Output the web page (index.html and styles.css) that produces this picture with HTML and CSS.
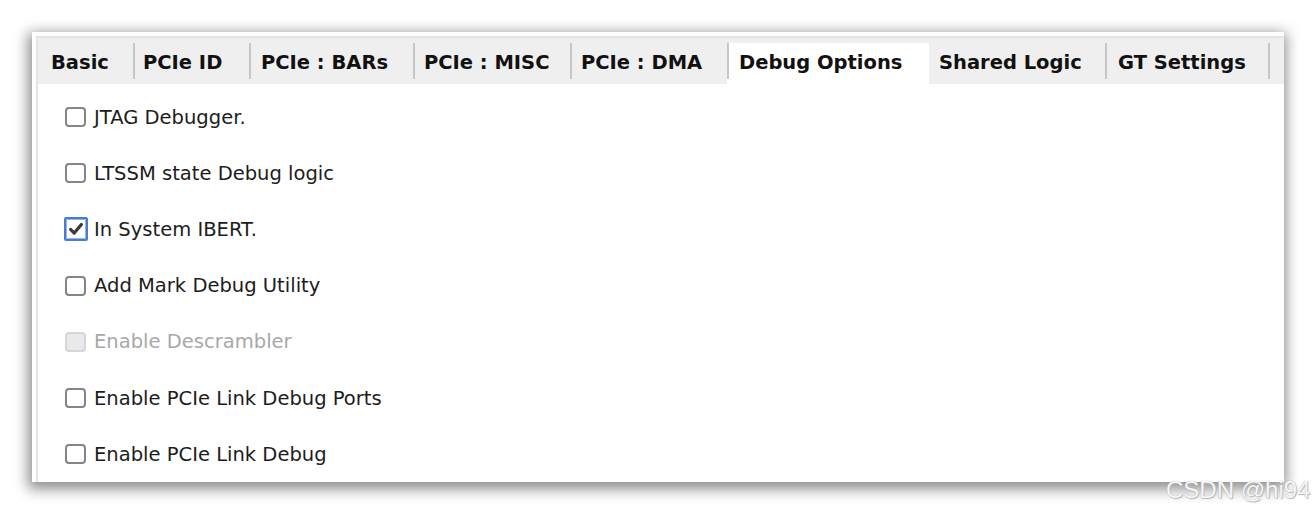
FILE: index.html
```html
<!DOCTYPE html>
<html>
<head>
<meta charset="utf-8">
<link rel="stylesheet" href="styles.css">
</head>
<body>
<div class="panel">
  <div class="frame">
    <div class="tabbar">
      <div class="tab t1">Basic</div>
      <div class="tab t2">PCIe ID</div>
      <div class="tab t3">PCIe : BARs</div>
      <div class="tab t4">PCIe : MISC</div>
      <div class="tab t5">PCIe : DMA</div>
      <div class="tab t6 active">Debug Options</div>
      <div class="tab t7">Shared Logic</div>
      <div class="tab t8">GT Settings</div>
    </div>
    <div class="content">
      <div class="row"><span class="box"></span><span class="label">JTAG Debugger.</span></div>
      <div class="row"><span class="box"></span><span class="label">LTSSM state Debug logic</span></div>
      <div class="row"><span class="box checked"><svg viewBox="0 0 20 20" width="18" height="18"><path d="M4 10.5 L8 14.5 L16 5" fill="none" stroke="#3a3a3a" stroke-width="3.6" stroke-linecap="round" stroke-linejoin="round"/></svg></span><span class="label">In System IBERT.</span></div>
      <div class="row"><span class="box"></span><span class="label">Add Mark Debug Utility</span></div>
      <div class="row disabled"><span class="box"></span><span class="label">Enable Descrambler</span></div>
      <div class="row"><span class="box"></span><span class="label">Enable PCIe Link Debug Ports</span></div>
      <div class="row"><span class="box"></span><span class="label">Enable PCIe Link Debug</span></div>
    </div>
  </div>
</div>
<div class="watermark">CSDN @hi94</div>
</body>
</html>
```

FILE: styles.css
```css
html, body {
  margin: 0;
  padding: 0;
  background: #ffffff;
}
body {
  width: 1316px;
  height: 514px;
  overflow: hidden;
  position: relative;
  font-family: "DejaVu Sans", sans-serif;
}
.panel {
  margin: 32px 0 0 32px;
  width: 1252px;
  height: 450px;
  background: #ffffff;
  box-shadow: -1px 4px 13px 3px rgba(0, 0, 0, 0.45);
  padding: 4px 0 0 4px;
  box-sizing: border-box;
}
.frame {
  height: 100%;
  border-top: 2px solid #e4e4e4;
  border-left: 2px solid #e4e4e4;
  box-sizing: border-box;
  display: flex;
  flex-direction: column;
}
.tabbar {
  height: 46px;
  background: #efefef;
  display: flex;
  align-items: flex-end;
  flex-shrink: 0;
}
.tab {
  height: 41px;
  box-sizing: border-box;
  padding: 1px 0 3px 12px;
  display: flex;
  align-items: center;
  font-weight: bold;
  font-size: 19.5px;
  color: #111;
  white-space: nowrap;
  background: linear-gradient(#c6c6c6, #c6c6c6) no-repeat left top / 2px 36px;
}
.t1 { width: 95px; background: none; padding-left: 13px; }
.t2 { width: 116px; padding-left: 10px; }
.t3 { width: 164px; }
.t4 { width: 157px; padding-left: 11px; }
.t5 { width: 157px; padding-left: 11px; }
.t6 { width: 202px; }
.t7 { width: 176px; background: none; padding-left: 10px; }
.t8 {
  width: 165px;
  padding-left: 13px;
  background:
    linear-gradient(#c6c6c6, #c6c6c6) no-repeat left top / 2px 36px,
    linear-gradient(#c6c6c6, #c6c6c6) no-repeat right top / 2px 36px;
}
.tab.active {
  background: linear-gradient(#c6c6c6, #c6c6c6) no-repeat left top / 2px 36px, #ffffff;
  background-color: #ffffff;
}
.content {
  flex: 1;
  padding: 5px 0 0 27px;
  display: flex;
  flex-direction: column;
}
.row {
  height: 56.2px;
  display: flex;
  align-items: center;
  font-size: 19.55px;
  color: #1c1c1c;
}
.box {
  width: 21px;
  height: 20px;
  box-sizing: border-box;
  border: 2px solid #858585;
  border-radius: 4px;
  background: #fff;
  margin-right: 8px;
  display: flex;
  align-items: center;
  justify-content: center;
}
.box.checked {
  width: 24px;
  height: 24px;
  margin-left: -1px;
  margin-right: 6px;
  border: 2px solid #4a7bd2;
  border-radius: 2px;
  box-shadow: inset 0 0 0 1px #9ab4e2;
}
.disabled .box {
  border-color: #d6d6d6;
  background: #e9e9e9;
}
.disabled .label {
  color: #a8a8a8;
}
.watermark {
  position: absolute;
  left: 1166px;
  top: 476px;
  font-family: "Liberation Sans", Arial, sans-serif;
  font-size: 24px;
  color: #f6f6f6;
  text-shadow: 0 0 1px #9a9a9a, 1px 1px 1px #bcbcbc;
  white-space: nowrap;
}
```
